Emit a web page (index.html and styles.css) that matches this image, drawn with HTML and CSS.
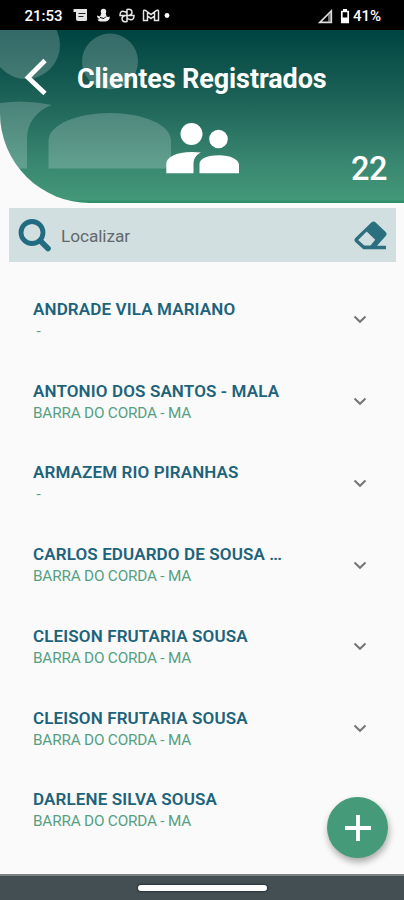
FILE: index.html
```
<!DOCTYPE html>
<html lang="pt-BR">
<head>
<meta charset="utf-8">
<title>Clientes Registrados</title>
<link rel="stylesheet" href="styles.css">
</head>
<body>
<div class="phone">
  <div class="status">
    <span class="clock">21:53</span>
    <svg class="notes" width="100" height="18" viewBox="0 0 100 18">
      <path d="M.5 2H14V5H.5zM3 5h11V12.500q0 1.500-1.500 1.500H5q-2 0-2-2z" fill="#e4e4e4"/>
      <path d="M5.500 6.500h7M5.500 9.500h5" stroke="#222"/>
      <g fill="#eee">
        <circle cx="30.500" cy="4.500" r="2.700"/>
        <path d="M28.500 6h4l1 3q1 1.500 3.300.5 0 4.500-4.300 5h-5q-2.500 0-3-2l2.500-.5q-3-.5-3-3.500l3 1z"/>
      </g>
      <path d="M27 10.500l4 1 2-2" stroke="#000" fill="none"/>
      <g fill="none" stroke="#e4e4e4" stroke-width="1.500">
        <path d="M54 8.500V2.500q5-1 5 3 0 2-3 3zM54 8.500h7q0 5-4 4-2 0-3-2zM54 8.500v6q-5 1-5-3 0-2 3-3zM54 8.500h-7q0-5 4-4 2 0 3 2z"/>
        <path d="M70.500 13.500V4.500q0-2 2-1l5.500 4 5.500-4q2-1 2 1V13.500h-4V9L78 11.500 74.500 9v4.500zM74.500 9V5M81.500 9V5"/>
      </g>
      <circle cx="94" cy="8.500" r="2.400" fill="#fff"/>
    </svg>
    <span class="grow"></span>
    <svg class="signal" width="15" height="15" viewBox="0 0 15 15"><path d="M1.800 13.300h11.500V2z" fill="none" stroke="#ddd" stroke-width="1.700"/><path d="M10 5.500l3-3v11h-3z" fill="#bbb" fill-opacity=".6"/></svg>
    <svg class="battery" width="10" height="15" viewBox="0 0 10 15"><path d="M1.800 2.500h6.400v11H1.800z" fill="none" stroke="#fff" stroke-width="1.700"/><path d="M3 0h4v2H3zM1.500 8.500h7v5h-7z" fill="#fff"/></svg>
    <span class="percent">41%</span>
  </div>

  <header class="header">
    <svg class="decor" width="404" height="172" viewBox="0 30 404 172">
      <g fill="#fff" fill-opacity=".2">
        <circle cx="26" cy="45" r="34"/>
        <circle cx="110" cy="61.500" r="28"/>
        <path d="M0 103Q26 99 52 105C36 111 27 123 27 139V168.500H0z"/>
        <path d="M48.500 168.500V141C48.500 124 78 113 110 113S171 124 171 141V168.500z"/>
      </g>
    </svg>
    <div class="bar">
      <svg class="back" width="24" height="38" viewBox="0 0 24 38"><path d="M21 2.500L4 19.500 21 35.500" fill="none" stroke="#fff" stroke-width="4.800"/></svg>
      <h1 class="title">Clientes Registrados</h1>
    </div>
    <div class="summary">
      <svg class="people" width="74" height="52" viewBox="166 122 74 52" fill="#fff">
        <circle cx="191.500" cy="134" r="11"/>
        <circle cx="218.500" cy="139" r="9.300"/>
        <path d="M166.300 173.200V164C166.300 156 180 150 201 152.500 195.500 155 193.500 159 193.500 165V173.200z"/>
        <path d="M199.500 173.200V164C199.500 158.500 208 155.300 219 155.300S239 159.500 239 165V173.200z"/>
      </svg>
      <span class="count">22</span>
    </div>
  </header>

  <div class="search">
    <svg width="34" height="34" viewBox="0 0 34 34"><circle cx="14" cy="13.500" r="11" fill="none" stroke="#216c80" stroke-width="4.800"/><path d="M22.500 22l7.500 7.500" stroke="#216c80" stroke-width="5.600" stroke-linecap="round"/></svg>
    <span class="hint">Localizar</span>
    <svg class="eraser" width="33" height="30" viewBox="354 220 33 30"><path d="M371.600 222.300Q373.500 220.500 375.400 222.300L385.700 232Q387.500 234 385.700 236L377 245.800H386V249.300H363.300L355.300 242Q353.500 240 355.300 238z" fill="#2c7080"/><path d="M366.700 231.500L375.200 239.700 370.500 245.600H364.300L358.200 240z" fill="#d2dfe1"/></svg>
  </div>

  <main class="list">
    <div class="row"><div class="text"><div class="name">ANDRADE VILA MARIANO</div><div class="city"> - </div></div><svg class="chev" viewBox="0 0 14 9"><path d="M1.500 1.500L7 6.800l5.500-5.300"/></svg></div>
    <div class="row"><div class="text"><div class="name">ANTONIO DOS SANTOS - MALA</div><div class="city">BARRA DO CORDA - MA</div></div><svg class="chev" viewBox="0 0 14 9"><path d="M1.500 1.500L7 6.800l5.500-5.300"/></svg></div>
    <div class="row"><div class="text"><div class="name">ARMAZEM RIO PIRANHAS</div><div class="city"> - </div></div><svg class="chev" viewBox="0 0 14 9"><path d="M1.500 1.500L7 6.800l5.500-5.300"/></svg></div>
    <div class="row"><div class="text"><div class="name">CARLOS EDUARDO DE SOUSA <span class="dots">...</span></div><div class="city">BARRA DO CORDA - MA</div></div><svg class="chev" viewBox="0 0 14 9"><path d="M1.500 1.500L7 6.800l5.500-5.300"/></svg></div>
    <div class="row"><div class="text"><div class="name">CLEISON FRUTARIA SOUSA</div><div class="city">BARRA DO CORDA - MA</div></div><svg class="chev" viewBox="0 0 14 9"><path d="M1.500 1.500L7 6.800l5.500-5.300"/></svg></div>
    <div class="row"><div class="text"><div class="name">CLEISON FRUTARIA SOUSA</div><div class="city">BARRA DO CORDA - MA</div></div><svg class="chev" viewBox="0 0 14 9"><path d="M1.500 1.500L7 6.800l5.500-5.300"/></svg></div>
    <div class="row"><div class="text"><div class="name">DARLENE SILVA SOUSA</div><div class="city">BARRA DO CORDA - MA</div></div></div>
  </main>

  <div class="fab"><svg width="26" height="26" viewBox="0 0 26 26"><path d="M13 0v26M0 13h26" stroke="#fff" stroke-width="3.800"/></svg></div>
  <div class="nav"><span class="pill"></span></div>
</div>
</body>
</html>
```
FILE: styles.css
```
* { box-sizing: border-box; }
body { margin: 0; background: #fafafa; font-family: Roboto, "Liberation Sans", sans-serif; }
svg { display: block; flex: none; }
.phone { position: relative; width: 404px; height: 900px; overflow: hidden; display: flex; flex-direction: column; }

.status { flex: none; height: 30px; background: #000; color: #fff; display: flex; align-items: center; padding: 2px 23px 0 24.500px; font-size: 15px; font-weight: 500; }
.clock { letter-spacing: 0; width: 38px; white-space: nowrap; }
.notes { margin-left: 10px; }
.grow { flex: 1; }
.signal { margin-right: 1px; }
.battery { margin: 0 3px 0 6px; }
.percent { letter-spacing: 0; }

.header { position: relative; flex: none; height: 172.500px; overflow: hidden; border-bottom-left-radius: 90px; background: linear-gradient(#004441 0, #1f6559 43%, #388570 75%, #439878 98%, #2e8f69 99%); color: #fff; }
.decor { position: absolute; left: 0; top: 0; }
.bar { position: relative; display: flex; align-items: center; height: 92px; padding: 2px 0 0 24px; }
.title { margin: 4px 0 0 29px; font-size: 27px; line-height: 32px; font-weight: 700; letter-spacing: -.1px; white-space: nowrap; }
.summary { position: relative; display: flex; align-items: flex-start; justify-content: space-between; padding: 0 17px 0 166px; }
.count { margin-top: 27px; font-size: 32.500px; line-height: 40px; font-weight: 500; letter-spacing: -.5px; }

.search { flex: none; display: flex; align-items: center; height: 54px; margin: 5.500px 8px 0 9px; padding: 0 9px; background: #d2dfe1; }
.search svg:first-child { margin-top: 1px; }
.hint { flex: 1; margin-left: 9px; padding-top: 1px; font-size: 17.300px; line-height: 24px; color: #62696b; letter-spacing: -.1px; }

.list { padding: 16.500px 37px 0 33px; }
.row { height: 81.750px; display: flex; align-items: center; justify-content: space-between; }
.text { padding-top: 1px; }
.name { font-size: 17px; line-height: 23px; font-weight: 600; letter-spacing: .13px; color: #1c637b; white-space: pre; }
.dots { letter-spacing: -.8px; }
.city { font-size: 15.300px; line-height: 21px; font-weight: 400; letter-spacing: -.18px; color: #55a083; white-space: pre; }
.chev { width: 14px; height: 9px; margin-top: 1px; fill: none; stroke: #757575; stroke-width: 2; }

.fab { position: absolute; left: 327px; top: 797px; width: 61px; height: 61px; border-radius: 50%; background: #459a79; display: flex; align-items: center; justify-content: center; box-shadow: 1px 4px 7px rgba(0,0,0,.33); }
.nav { position: absolute; left: 0; bottom: 0; width: 404px; height: 26px; background: #444f53; border-top: 2px solid #7d8383; display: flex; justify-content: center; padding-top: 9px; }
.pill { width: 129px; height: 6px; border-radius: 3px; background: #fff; box-shadow: 0 0 2px 1px #26373c; }
```
